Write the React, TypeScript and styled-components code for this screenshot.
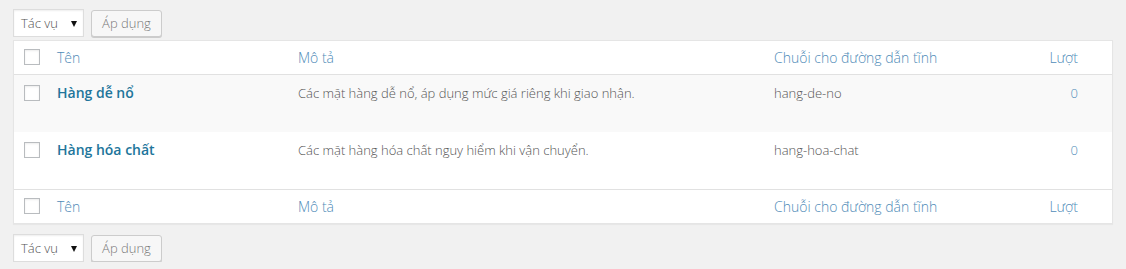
import React, { FC } from "react"
import styled, { createGlobalStyle } from "styled-components"

const GlobalStyle = createGlobalStyle`
  html, body {
    margin: 0;
    padding: 0;
    background: #f1f1f1;
    font-family: "Open Sans", "Liberation Sans", sans-serif;
    color: #444;
  }
`

const Page = styled.div`
  padding: 9px 13px 0 13px;
`

const TableNav = styled.div<{ $bottom?: boolean }>`
  display: flex;
  align-items: center;
  gap: 7px;
  height: 28px;
  margin: ${ p => p.$bottom ? "10px 0 0" : "0 0 3px" };
`

const Select = styled.div`
  display: flex;
  align-items: center;
  justify-content: space-between;
  box-sizing: border-box;
  width: 71px;
  height: 28px;
  padding: 0 6px 0 7px;
  background: #fff;
  border: 1px solid #ddd;
  box-shadow: inset 0 1px 2px rgba(0, 0, 0, .07);
  font-size: 13px;
  font-weight: 300;
  color: #555;
`

const Arrow = styled.span`
  width: 0;
  height: 0;
  border-left: 3px solid transparent;
  border-right: 3px solid transparent;
  border-top: 6px solid #111;
  margin-top: 1px;
`

const Button = styled.button`
  box-sizing: border-box;
  height: 27px;
  width: 71px;
  padding: 0 8px;
  background: #f7f7f7;
  border: 1px solid #ccc;
  border-radius: 3px;
  box-shadow: 0 1px 0 #ccc;
  font-family: inherit;
  font-size: 13px;
  font-weight: 300;
  color: #777;
  cursor: pointer;
`

const Table = styled.div`
  background: #fff;
  border: 1px solid #e5e5e5;
  box-shadow: 0 1px 1px rgba(0, 0, 0, .04);
`

const Row = styled.div<{ $kind: "head" | "foot" | "body"; $alt?: boolean }>`
  display: grid;
  grid-template-columns: 33px 241px 476px 236px 1fr;
  height: ${ p => p.$kind === "body" ? "57px" : "33px" };
  background: ${ p => p.$alt ? "#f9f9f9" : "#fff" };
  border-bottom: ${ p => p.$kind === "head" ? "1px solid #e1e1e1" : "none" };
  border-top: ${ p => p.$kind === "foot" ? "1px solid #e1e1e1" : "none" };
`

const Cell = styled.div<{ $head?: boolean; $right?: boolean }>`
  padding: ${ p => p.$head ? "7px" : "8px" } ${ p => p.$right ? "34px" : "10px" } 0 10px;
  line-height: 20px;
  font-size: ${ p => p.$head ? "14px" : "13px" };
  font-weight: 300;
  color: ${ p => p.$head ? "#4f8cb8" : "#555" };
  text-align: ${ p => p.$right ? "right" : "left" };
  white-space: nowrap;
`

const CheckCell = styled.div<{ $head?: boolean }>`
  padding: ${ p => p.$head ? "8px" : "10px" } 0 0 10px;
`

const Checkbox = styled.span`
  display: block;
  box-sizing: border-box;
  width: 16px;
  height: 16px;
  background: #fff;
  border: 1px solid #b9bcbf;
  box-shadow: inset 0 1px 2px rgba(0, 0, 0, .08);
`

const RowTitle = styled.a`
  font-size: 14px;
  font-weight: 600;
  color: #21759b;
  text-decoration: none;
`

const Count = styled.a`
  color: #4f8cb8;
  text-decoration: none;
`

const terms = [
  { name: "Hàng dễ nổ", description: "Các mặt hàng dễ nổ, áp dụng mức giá riêng khi giao nhận.", slug: "hang-de-no", count: 0 },
  { name: "Hàng hóa chất", description: "Các mặt hàng hóa chất nguy hiểm khi vận chuyển.", slug: "hang-hoa-chat", count: 0 }
]

const BulkActions: FC<{ bottom?: boolean }> = ({ bottom }) => (
  <TableNav $bottom={ bottom }>
    <Select>
      <span>Tác vụ</span>
      <Arrow />
    </Select>
    <Button>Áp dụng</Button>
  </TableNav>
)

const HeaderRow: FC<{ kind: "head" | "foot" }> = ({ kind }) => (
  <Row $kind={ kind }>
    <CheckCell $head><Checkbox /></CheckCell>
    <Cell $head>Tên</Cell>
    <Cell $head>Mô tả</Cell>
    <Cell $head>Chuỗi cho đường dẫn tĩnh</Cell>
    <Cell $head $right>Lượt</Cell>
  </Row>
)

const App: FC = () => (
  <Page>
    <GlobalStyle />
    <BulkActions />
    <Table>
      <HeaderRow kind="head" />
      { terms.map((term, index) =>
        <Row key={ term.slug } $kind="body" $alt={ index % 2 === 0 }>
          <CheckCell><Checkbox /></CheckCell>
          <Cell><RowTitle href="#">{ term.name }</RowTitle></Cell>
          <Cell>{ term.description }</Cell>
          <Cell>{ term.slug }</Cell>
          <Cell $right><Count href="#">{ term.count }</Count></Cell>
        </Row>
      ) }
      <HeaderRow kind="foot" />
    </Table>
    <BulkActions bottom />
  </Page>
)

export default App
